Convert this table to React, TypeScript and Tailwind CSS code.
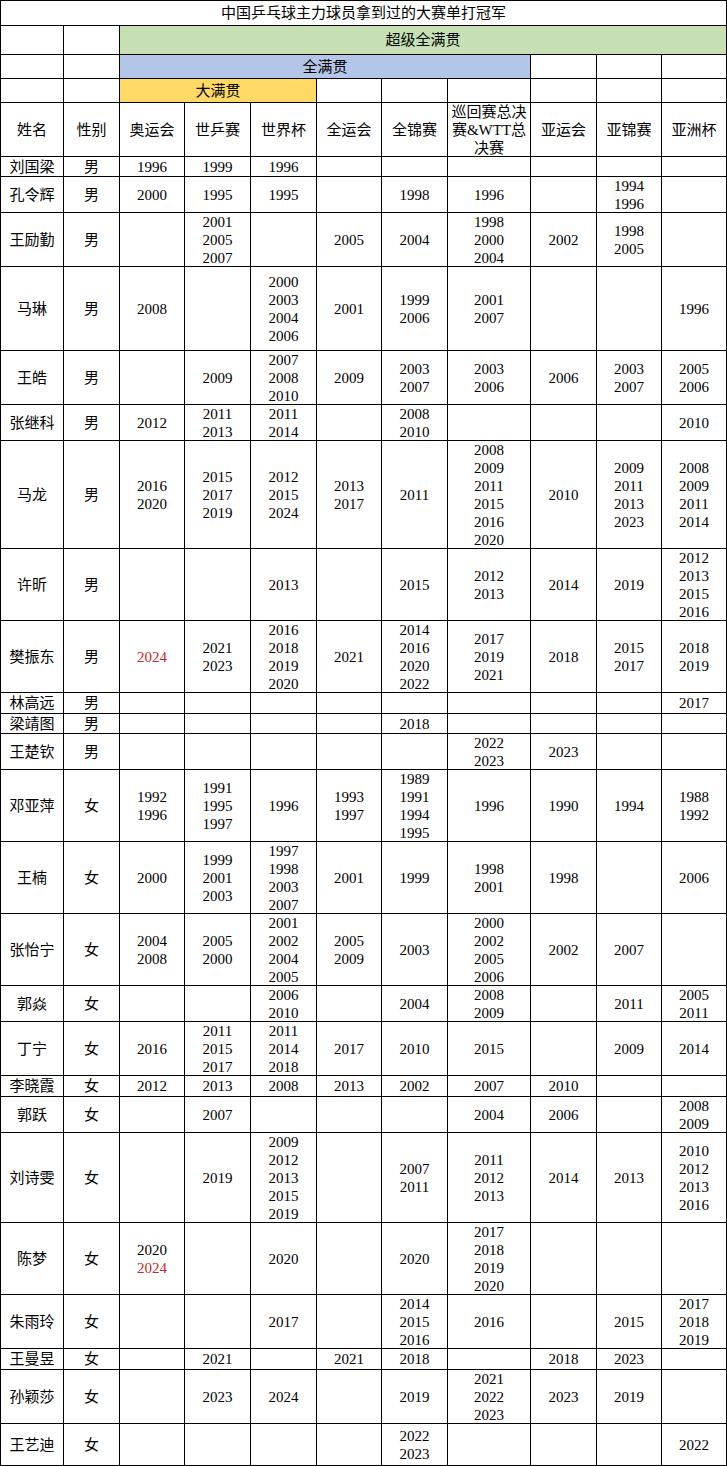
import React from "react";

type Row = {
  name: string;
  sex: string;
  cells: string[];
};

// year lists per cell, "/" separates lines, "!" marks a red (most recent) title
const ROWS: Row[] = [
  { name: "刘国梁", sex: "男", cells: ["1996", "1999", "1996", "", "", "", "", "", ""] },
  { name: "孔令辉", sex: "男", cells: ["2000", "1995", "1995", "", "1998", "1996", "", "1994/1996", ""] },
  { name: "王励勤", sex: "男", cells: ["", "2001/2005/2007", "", "2005", "2004", "1998/2000/2004", "2002", "1998/2005", ""] },
  { name: "马琳", sex: "男", cells: ["2008", "", "2000/2003/2004/2006", "2001", "1999/2006", "2001/2007", "", "", "1996"] },
  { name: "王皓", sex: "男", cells: ["", "2009", "2007/2008/2010", "2009", "2003/2007", "2003/2006", "2006", "2003/2007", "2005/2006"] },
  { name: "张继科", sex: "男", cells: ["2012", "2011/2013", "2011/2014", "", "2008/2010", "", "", "", "2010"] },
  {
    name: "马龙",
    sex: "男",
    cells: [
      "2016/2020",
      "2015/2017/2019",
      "2012/2015/2024",
      "2013/2017",
      "2011",
      "2008/2009/2011/2015/2016/2020",
      "2010",
      "2009/2011/2013/2023",
      "2008/2009/2011/2014",
    ],
  },
  { name: "许昕", sex: "男", cells: ["", "", "2013", "", "2015", "2012/2013", "2014", "2019", "2012/2013/2015/2016"] },
  {
    name: "樊振东",
    sex: "男",
    cells: ["!2024", "2021/2023", "2016/2018/2019/2020", "2021", "2014/2016/2020/2022", "2017/2019/2021", "2018", "2015/2017", "2018/2019"],
  },
  { name: "林高远", sex: "男", cells: ["", "", "", "", "", "", "", "", "2017"] },
  { name: "梁靖图", sex: "男", cells: ["", "", "", "", "2018", "", "", "", ""] },
  { name: "王楚钦", sex: "男", cells: ["", "", "", "", "", "2022/2023", "2023", "", ""] },
  {
    name: "邓亚萍",
    sex: "女",
    cells: ["1992/1996", "1991/1995/1997", "1996", "1993/1997", "1989/1991/1994/1995", "1996", "1990", "1994", "1988/1992"],
  },
  {
    name: "王楠",
    sex: "女",
    cells: ["2000", "1999/2001/2003", "1997/1998/2003/2007", "2001", "1999", "1998/2001", "1998", "", "2006"],
  },
  {
    name: "张怡宁",
    sex: "女",
    cells: ["2004/2008", "2005/2000", "2001/2002/2004/2005", "2005/2009", "2003", "2000/2002/2005/2006", "2002", "2007", ""],
  },
  { name: "郭焱", sex: "女", cells: ["", "", "2006/2010", "", "2004", "2008/2009", "", "2011", "2005/2011"] },
  { name: "丁宁", sex: "女", cells: ["2016", "2011/2015/2017", "2011/2014/2018", "2017", "2010", "2015", "", "2009", "2014"] },
  { name: "李晓霞", sex: "女", cells: ["2012", "2013", "2008", "2013", "2002", "2007", "2010", "", ""] },
  { name: "郭跃", sex: "女", cells: ["", "2007", "", "", "", "2004", "2006", "", "2008/2009"] },
  {
    name: "刘诗雯",
    sex: "女",
    cells: ["", "2019", "2009/2012/2013/2015/2019", "", "2007/2011", "2011/2012/2013", "2014", "2013", "2010/2012/2013/2016"],
  },
  { name: "陈梦", sex: "女", cells: ["2020/!2024", "", "2020", "", "2020", "2017/2018/2019/2020", "", "", ""] },
  { name: "朱雨玲", sex: "女", cells: ["", "", "2017", "", "2014/2015/2016", "2016", "", "2015", "2017/2018/2019"] },
  { name: "王曼昱", sex: "女", cells: ["", "2021", "", "2021", "2018", "", "2018", "2023", ""] },
  { name: "孙颖莎", sex: "女", cells: ["", "2023", "2024", "", "2019", "2021/2022/2023", "2023", "2019", ""] },
  { name: "王艺迪", sex: "女", cells: ["", "", "", "", "2022/2023", "", "", "", "2022"] },
];

const HEADERS = ["姓名", "性别", "奥运会", "世乒赛", "世界杯", "全运会", "全锦赛", "", "亚运会", "亚锦赛", "亚洲杯"];

const cellCls =
  "flex items-center justify-center border-r border-b border-black text-center leading-[18px] whitespace-nowrap";

function Years({ value }: { value: string }) {
  if (!value) return null;
  return (
    <div className="flex flex-col items-center">
      {value.split("/").map((y) =>
        y.startsWith("!") ? (
          <span key={y} className="text-[#c62828]">
            {y.slice(1)}
          </span>
        ) : (
          <span key={y}>{y}</span>
        )
      )}
    </div>
  );
}

export default function App() {
  return (
    <div className="min-h-screen bg-white">
      <div
        className="grid w-[727px] border-l border-t border-black text-[15px] text-black grid-cols-[63px_56px_65px_66px_66px_65px_66px_83px_66px_65px_65px] grid-rows-[25px_29px_24px_24px_54px_20px_36px_54px_84px_54px_36px_108px_72px_72px_21px_20px_36px_72px_72px_72px_36px_54px_21px_36px_90px_72px_54px_21px_54px_42px]"
        style={{ fontFamily: '"Liberation Serif", "Noto Sans CJK SC", serif' }}
      >
        {/* title */}
        <div className={`${cellCls} col-span-11`}>中国乒乓球主力球员拿到过的大赛单打冠军</div>

        {/* 超级全满贯 */}
        <div className={cellCls} />
        <div className={cellCls} />
        <div className={`${cellCls} col-span-9 bg-[#c6e0b4]`}>超级全满贯</div>

        {/* 全满贯 */}
        <div className={cellCls} />
        <div className={cellCls} />
        <div className={`${cellCls} col-span-6 bg-[#b4c6e7]`}>全满贯</div>
        <div className={cellCls} />
        <div className={cellCls} />
        <div className={cellCls} />

        {/* 大满贯 */}
        <div className={cellCls} />
        <div className={cellCls} />
        <div className={`${cellCls} col-span-3 bg-[#ffd966]`}>大满贯</div>
        <div className={cellCls} />
        <div className={cellCls} />
        <div className={cellCls} />
        <div className={cellCls} />
        <div className={cellCls} />
        <div className={cellCls} />

        {/* column headings */}
        {HEADERS.map((h, i) =>
          i === 7 ? (
            <div key={i} className={cellCls}>
              <div className="flex flex-col items-center">
                <span>巡回赛总决</span>
                <span>赛&amp;WTT总</span>
                <span>决赛</span>
              </div>
            </div>
          ) : (
            <div key={i} className={cellCls}>
              {h}
            </div>
          )
        )}

        {ROWS.map((r) => (
          <React.Fragment key={r.name}>
            <div className={cellCls}>{r.name}</div>
            <div className={cellCls}>{r.sex}</div>
            {r.cells.map((c, i) => (
              <div key={i} className={cellCls}>
                <Years value={c} />
              </div>
            ))}
          </React.Fragment>
        ))}
      </div>
    </div>
  );
}
